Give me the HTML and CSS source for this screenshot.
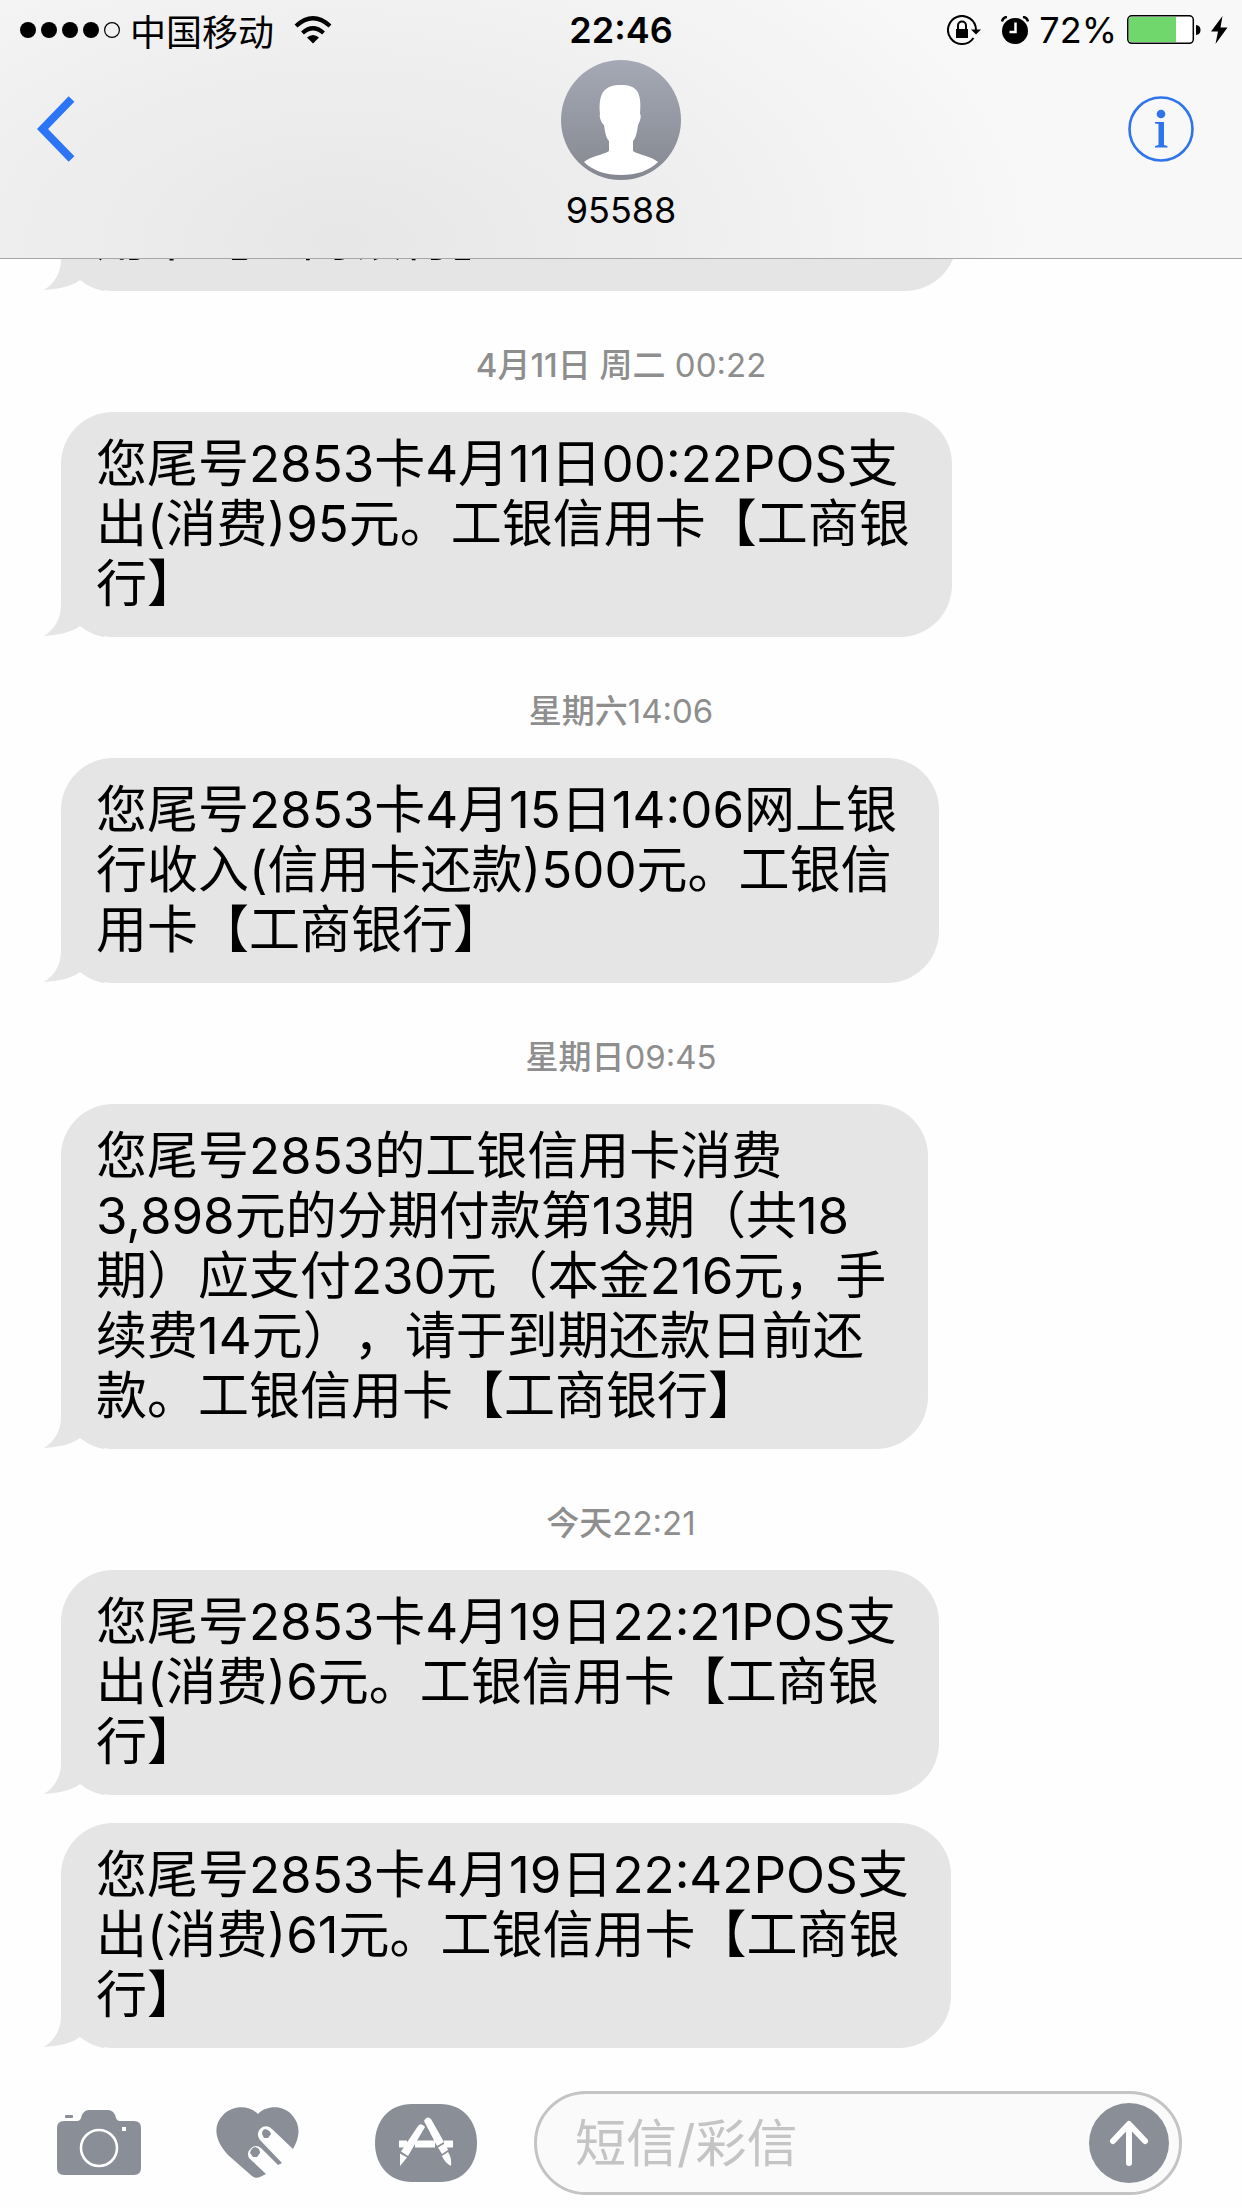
FILE: index.html
```
<!DOCTYPE html>
<html lang="zh-CN">
<head>
  <title>95588</title>
  <meta charset="utf-8">
  <meta name="viewport" content="width=device-width, initial-scale=1">
  <link rel="stylesheet" href="styles.css">
</head>
<body>
  <header class="top">
    <div class="status">
      <div class="status-left">
        <svg class="signal" width="100" height="16" viewBox="0 0 100 16">
          <circle cx="8" cy="8" r="8"/>
          <circle cx="29" cy="8" r="8"/>
          <circle cx="50" cy="8" r="8"/>
          <circle cx="71" cy="8" r="8"/>
          <circle cx="92" cy="8" r="7.4" fill="none" stroke="#000" stroke-width="1.2"/>
        </svg>
        <span class="carrier">中国移动</span>
        <svg class="wifi" width="38" height="28" viewBox="0 0 38 28">
          <path d="M2 10Q19 -5.500 36 10" fill="none" stroke="#000" stroke-width="4.200"/>
          <path d="M8.500 17Q19 7.500 29.500 17" fill="none" stroke="#000" stroke-width="4.200"/>
          <path d="M13 21.500Q19 16.500 25 21.500L19 27.500Z"/>
        </svg>
      </div>
      <div class="clock">22:46</div>
      <div class="status-right">
        <svg width="34" height="30" viewBox="0 0 34 30">
          <path d="M26.500 23A14 14 0 1 1 29 15" fill="none" stroke="#000" stroke-width="2"/>
          <path d="M24 14.500H34L29 19.500Z"/>
          <rect x="9" y="14" width="12" height="9"/>
          <path d="M11 15V10.500a4 4 0 0 1 8 0V15" fill="none" stroke="#000" stroke-width="2"/>
        </svg>
        <svg width="28" height="28" viewBox="0 0 28 28">
          <circle cx="14" cy="15" r="13"/>
          <path d="M1 5.500Q2 1.500 6 1M27 5.500Q26 1.500 22 1" fill="none" stroke="#000" stroke-width="2.500"/>
          <path d="M14.500 6.500V16H8.500" fill="none" stroke="#fff" stroke-width="2.500"/>
        </svg>
        <span class="percent">72%</span>
        <svg class="battery" width="74" height="30" viewBox="0 0 74 30">
          <rect x="0.800" y="0.800" width="65.500" height="27.500" rx="4" fill="#fff" stroke="#000" stroke-width="1.500"/>
          <path d="M4 2H49V27H4Q2 27 2 25V4Q2 2 4 2Z" fill="#70d76c"/>
          <path d="M69 10Q73.500 10.500 73.500 15T69 20Z"/>
        </svg>
        <svg width="17" height="28" viewBox="0 0 17 28">
          <path d="M11.500 0L0 15.500H7L4.500 28L16.500 11.500H9.500Z"/>
        </svg>
      </div>
    </div>
    <nav class="nav">
      <button class="back" aria-label="返回">
        <svg width="38" height="66" viewBox="0 0 38 66">
          <path d="M34.500 3L5.500 33L34.500 63" fill="none" stroke="#2b75f6" stroke-width="8"/>
        </svg>
      </button>
      <div class="contact">
        <svg width="120" height="120" viewBox="0 0 120 120">
          <defs>
            <linearGradient id="shade" x1="0" y1="0" x2="0" y2="1">
              <stop offset="0" stop-color="#a5a9b5"/>
              <stop offset="1" stop-color="#858890"/>
            </linearGradient>
          </defs>
          <circle cx="60" cy="60" r="60" fill="url(#shade)"/>
          <path fill="#fff" d="M39 54C37 32 44 25 60 25S81 32 79 54C80.500 55 79.500 61 77 65C76 72 75 78 72 81V91C78 95 90 96 97 102C88 111 75 115 60 115S32 111 23 102C30 96 42 95 48 91V81C45 78 44 72 43 65C40 63 38 56 39 54Z"/>
        </svg>
        <span class="name">95588</span>
      </div>
      <button class="info" aria-label="详细信息">
        <svg width="66" height="66" viewBox="0 0 66 66" fill="#2e74ea">
          <circle cx="33" cy="33" r="31.500" fill="none" stroke="#2e74ea" stroke-width="2.600"/>
          <circle cx="33" cy="18" r="4.300"/>
          <path d="M27 26H36V49L39.500 50V51.500H27V50L30.500 49V28L27 27.500Z"/>
        </svg>
      </button>
    </nav>
  </header>

  <main class="messages">
    <p class="bubble bubble-cut">用卡【工商银行】</p>

    <div class="time"><b>4月11日 周二</b> 00:22</div>
    <p class="bubble">您尾号2853卡4月11日00:22POS支<br>出(消费)95元。工银信用卡【工商银<br>行】</p>

    <div class="time"><b>星期六</b>14:06</div>
    <p class="bubble">您尾号2853卡4月15日14:06网上银<br>行收入(信用卡还款)500元。工银信<br>用卡【工商银行】</p>

    <div class="time"><b>星期日</b>09:45</div>
    <p class="bubble">您尾号2853的工银信用卡消费<br>3,898元的分期付款第13期（共18<br>期）应支付230元（本金216元，手<br>续费14元），请于到期还款日前还<br>款。工银信用卡【工商银行】</p>

    <div class="time"><b>今天</b>22:21</div>
    <p class="bubble">您尾号2853卡4月19日22:21POS支<br>出(消费)6元。工银信用卡【工商银<br>行】</p>
    <p class="bubble">您尾号2853卡4月19日22:42POS支<br>出(消费)61元。工银信用卡【工商银<br>行】</p>
  </main>

  <form class="compose">
    <button type="button" class="tool" aria-label="相机">
      <svg width="84" height="66" viewBox="0 0 84 66" fill="#8a8e96">
        <path d="M7 11H20Q23 11 24 8Q26 0 32 0H51Q57 0 59 8Q60 11 63 11H77Q84 11 84 18V58Q84 65 77 65H7Q0 65 0 58V18Q0 11 7 11Z"/>
        <rect x="8" y="5" width="8" height="3" rx="1"/>
        <circle cx="42" cy="38" r="18" fill="none" stroke="#fff" stroke-width="2.600"/>
        <rect x="65" y="17" width="4" height="4" fill="#fff"/>
      </svg>
    </button>
    <button type="button" class="tool" aria-label="手写">
      <svg width="84" height="72" viewBox="0 0 84 72" fill="#8a8e96">
        <path d="M42 7C51 -2 67 -2 76 8C84 17 85 28 77 42L56 22A8 8 0 0 0 44 33L66 56L62 58L45 41A8 8 0 0 0 33 51L50 67L44 70Q40 72 36 69L12 48C-2 33 -3 18 7 8C17 -2 33 -2 42 7Z"/>
        <path d="M46 27Q46 23 49 22Q54 23 55 27L52 31H48ZM34 46Q35 41 39 40Q44 41 44 46L41 50H37Z"/>
      </svg>
    </button>
    <button type="button" class="tool" aria-label="App Store">
      <svg width="102" height="78" viewBox="0 0 102 78">
        <path fill="#8a8e96" d="M37 0H65C88 0 102 17 102 39S88 78 65 78H37C14 78 0 61 0 39S14 0 37 0Z"/>
        <path d="M24 40H32M40 40H60M69 40H78" stroke="#fff" stroke-width="7"/>
        <g fill="#fff">
          <path d="M43 22Q46 18 50 23L33 52L26 47.500Z"/>
          <path d="M25 49.500L32 53.500L25 62Z"/>
          <path d="M49 17Q52 11 56 15L69 38L62 42Z"/>
          <path d="M63 43.500L70 39.500L73 46L67 50Z"/>
          <path d="M67 52L73 48Q77 54 76 62Q70 59 67 52Z"/>
        </g>
      </svg>
    </button>
    <div class="field">
      <input type="text" class="text" placeholder="短信/彩信" aria-label="短信/彩信">
      <button type="submit" class="send" aria-label="发送">
        <svg width="80" height="80" viewBox="0 0 80 80">
          <circle cx="40" cy="40" r="40" fill="#8a8e96"/>
          <path d="M40 60V22M24 38L40 21L56 38" fill="none" stroke="#fff" stroke-width="6" stroke-linecap="round" stroke-linejoin="round"/>
        </svg>
      </button>
    </div>
  </form>
</body>
</html>
```
FILE: styles.css
```
* {
  box-sizing: border-box;
}
body {
  margin: 0;
  height: 100vh;
  display: flex;
  flex-direction: column;
  background-color: #fefefe;
  color: #000;
  font-family: Inter, "Noto Sans CJK SC", sans-serif;
  text-spacing-trim: space-all;
}
button {
  padding: 0;
  border: none;
  background: none;
}
svg {
  display: block;
}

/* status bar and contact */
.top {
  flex: none;
  border-bottom: 1px solid #a5a8a5;
  background: radial-gradient(ellipse 700px 380px at 340px 240px, #e7e7e8 0%, #ededee 40%, #f3f3f4 75%, #f8f8f8 100%);
}
.status {
  display: grid;
  grid-template-columns: 1fr auto 1fr;
  align-items: center;
  height: 60px;
  padding: 0 14px;
  font-size: 36px;
}
.status-left, .status-right {
  display: flex;
  align-items: center;
}
.signal {
  margin-left: 6px;
}
.carrier {
  margin: 0 20px 0 10px;
}
.clock {
  font-weight: 600;
}
.status-right {
  justify-content: flex-end;
  gap: 10px;
}
.status-right svg + svg {
  margin-left: 10px;
}
.status-right .battery + svg {
  margin-left: 0;
}
.nav {
  display: grid;
  grid-template-columns: 1fr auto 1fr;
  align-items: start;
  padding: 0 37px;
}
.back {
  justify-self: start;
  margin-top: 36px;
}
.info {
  justify-self: end;
  margin: 36px 11px 0 0;
}
.contact {
  display: flex;
  flex-direction: column;
  align-items: center;
}
.name {
  margin: 8px 0 26px;
  font-size: 36px;
  line-height: 44px;
}

/* conversation */
.messages {
  flex: 1;
  min-height: 0;
  overflow: hidden;
  display: flex;
  flex-direction: column;
  justify-content: flex-end;
  align-items: flex-start;
  padding: 0 61px;
}
.bubble {
  position: relative;
  isolation: isolate;
  flex: none;
  margin: 0;
  padding: 22px 42px 23px 35px;
  border-radius: 52px;
  background-color: #e5e5e5;
  font-size: 51px;
  line-height: 60px;
  white-space: nowrap;
}
.bubble::before {
  content: "";
  position: absolute;
  z-index: -1;
  left: -17px;
  bottom: 0;
  width: 60px;
  height: 50px;
  background-color: #e5e5e5;
  clip-path: path("M17 0V18C17 32 10 43 0 49C14 48 26 46 36 39C44 45 50 48 60 50V0Z");
}
.bubble + .bubble {
  margin-top: 28px;
}
.bubble-cut {
  min-width: 80%;
}
.time {
  flex: none;
  align-self: center;
  padding: 54px 0 27px;
  color: #8e8e8e;
  font-size: 33px;
  line-height: 40px;
}
.time b {
  font-weight: 500;
}

/* compose bar */
.compose {
  flex: none;
  display: flex;
  align-items: center;
  gap: 75px;
  height: 160px;
  margin: 0;
  padding: 30px 60px 0 57px;
}
.tool {
  flex: none;
}
.field {
  flex: 1;
  min-width: 0;
  display: flex;
  align-items: center;
  height: 104px;
  margin: 0 0 0 -18px;
  padding: 0 10px 0 38px;
  border: 3px solid #c4c4c4;
  border-radius: 52px;
  background-color: #fafafa;
}
.text {
  flex: 1;
  min-width: 0;
  padding: 0;
  border: none;
  outline: none;
  background: none;
  font-family: inherit;
  font-size: 51px;
}
.text::placeholder {
  color: #c4c4c4;
}
.send {
  flex: none;
}
```
